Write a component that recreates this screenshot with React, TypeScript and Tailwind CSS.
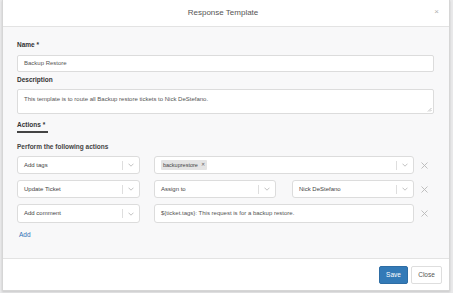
import React from "react";

// small chevron used inside the select boxes
const Chevron = () => (
  <svg width="6" height="4" viewBox="0 0 6 4" fill="none" stroke="#b3b3b3" strokeWidth="0.8">
    <path d="M0.5 0.7 L3 3.2 L5.5 0.7" />
  </svg>
);

const RemoveIcon = () => (
  <svg width="7" height="7" viewBox="0 0 7 7" stroke="#b8b8b8" strokeWidth="0.9">
    <path d="M0.5 0.5 L6.5 6.5 M6.5 0.5 L0.5 6.5" />
  </svg>
);

const Select: React.FC<{ value?: string; className?: string; children?: React.ReactNode }> = ({
  value,
  className = "",
  children,
}) => (
  <div
    className={`flex items-center h-full bg-white border border-[#dcdcdc] rounded-[3px] ${className}`}
  >
    <div className="flex-1 flex items-center pl-[6px] text-[6px] text-[#444] truncate">
      {children ?? value}
    </div>
    <div className="w-px h-[9px] bg-[#dedede]" />
    <div className="w-[16px] flex items-center justify-center">
      <Chevron />
    </div>
  </div>
);

const App: React.FC = () => {
  return (
    <div
      className="w-[453px] h-[293px] bg-[#e9e9ea] pl-[2px] pr-[3px] pb-[2px]"
      style={{ fontFamily: '"Liberation Sans", Arial, sans-serif' }}
    >
      <div className="w-[448px] h-[291px] bg-white border border-[#d6d6d6] border-t-0 flex flex-col shadow-[0_1px_2px_rgba(0,0,0,0.15)]">
        {/* header */}
        <div className="h-[27px] flex items-center justify-center relative border-b border-[#e3e3e3]">
          <span className="text-[8px] text-[#555] ml-[-6px]">Response Template</span>
          <span className="absolute right-[10px] top-[8px] text-[8px] text-[#b0b0b0] leading-none">×</span>
        </div>

        {/* body */}
        <div className="flex-1 bg-[#f8f8f9] pl-[14px] pr-[15px] pt-[13px] flex flex-col">
          <div className="h-[10px] leading-[10px] text-[6.5px] font-bold text-[#333]">Name *</div>
          <div className="mt-[5px] h-[17px] bg-white border border-[#dcdcdc] rounded-[2px] flex items-center pl-[6px] text-[6px] text-[#555]">
            Backup Restore
          </div>
          <div className="mt-[3px] h-[10px] leading-[10px] text-[6.5px] font-bold text-[#333]">Description</div>
          <div className="mt-[4px] h-[25px] bg-white border border-[#dcdcdc] rounded-[2px] relative pl-[6px] pt-[5px] text-[6px] text-[#555]">
            This template is to route all Backup restore tickets to Nick DeStefano.
            <svg className="absolute right-[1px] bottom-[1px]" width="5" height="5" viewBox="0 0 5 5" stroke="#999" strokeWidth="0.6">
              <path d="M4.5 1 L1 4.5 M4.5 3 L3 4.5" />
            </svg>
          </div>

          {/* tab */}
          <div className="mt-[6px] self-start border-b-2 border-[#444] pb-[2px] pr-[3px] h-[13px] leading-[10px] text-[6.5px] font-bold text-[#333]">
            Actions *
          </div>

          <div className="mt-[9px] h-[10px] leading-[10px] text-[6.5px] font-bold text-[#444]">
            Perform the following actions
          </div>

          <div className="mt-[4px] flex flex-col gap-[6px]">
            <div className="h-[18px] flex items-center">
              <Select value="Add tags" className="w-[123px]" />
              <Select className="w-[260px] ml-[14px]">
                <span className="bg-[#e4e4e4] text-[#444] px-[2px] py-[1px] rounded-[1px] text-[5.5px] flex items-center gap-[3px]">
                  backuprestore <span className="text-[5px] text-[#666]">✕</span>
                </span>
              </Select>
              <div className="flex-1 flex justify-center">
                <RemoveIcon />
              </div>
            </div>
            <div className="h-[18px] flex items-center">
              <Select value="Update Ticket" className="w-[123px]" />
              <Select value="Assign to" className="w-[122px] ml-[14px]" />
              <Select value="Nick DeStefano" className="w-[122px] ml-[16px]" />
              <div className="flex-1 flex justify-center">
                <RemoveIcon />
              </div>
            </div>
            <div className="h-[19px] flex items-center">
              <Select value="Add comment" className="w-[123px]" />
              <div className="w-[260px] ml-[14px] h-full bg-white border border-[#dcdcdc] rounded-[3px] flex items-center pl-[6px] text-[6px] text-[#555]">
                {"${ticket.tags}: This request is for a backup restore."}
              </div>
              <div className="flex-1 flex justify-center">
                <RemoveIcon />
              </div>
            </div>
          </div>

          <div className="mt-[7px] ml-[2px] h-[10px] leading-[10px] text-[6.5px] text-[#2d6fb5]">Add</div>
        </div>

        {/* footer */}
        <div className="h-[32px] border-t border-[#e3e3e3] flex items-start justify-end pt-[7px] pr-[7px] gap-[3px]">
          <button className="w-[29px] h-[18px] bg-[#337ab7] border border-[#2e6da4] rounded-[2px] text-white text-[6.5px]">
            Save
          </button>
          <button className="w-[31px] h-[18px] bg-white border border-[#dedede] rounded-[2px] text-[#555] text-[6.5px]">
            Close
          </button>
        </div>
      </div>
    </div>
  );
};

export default App;
